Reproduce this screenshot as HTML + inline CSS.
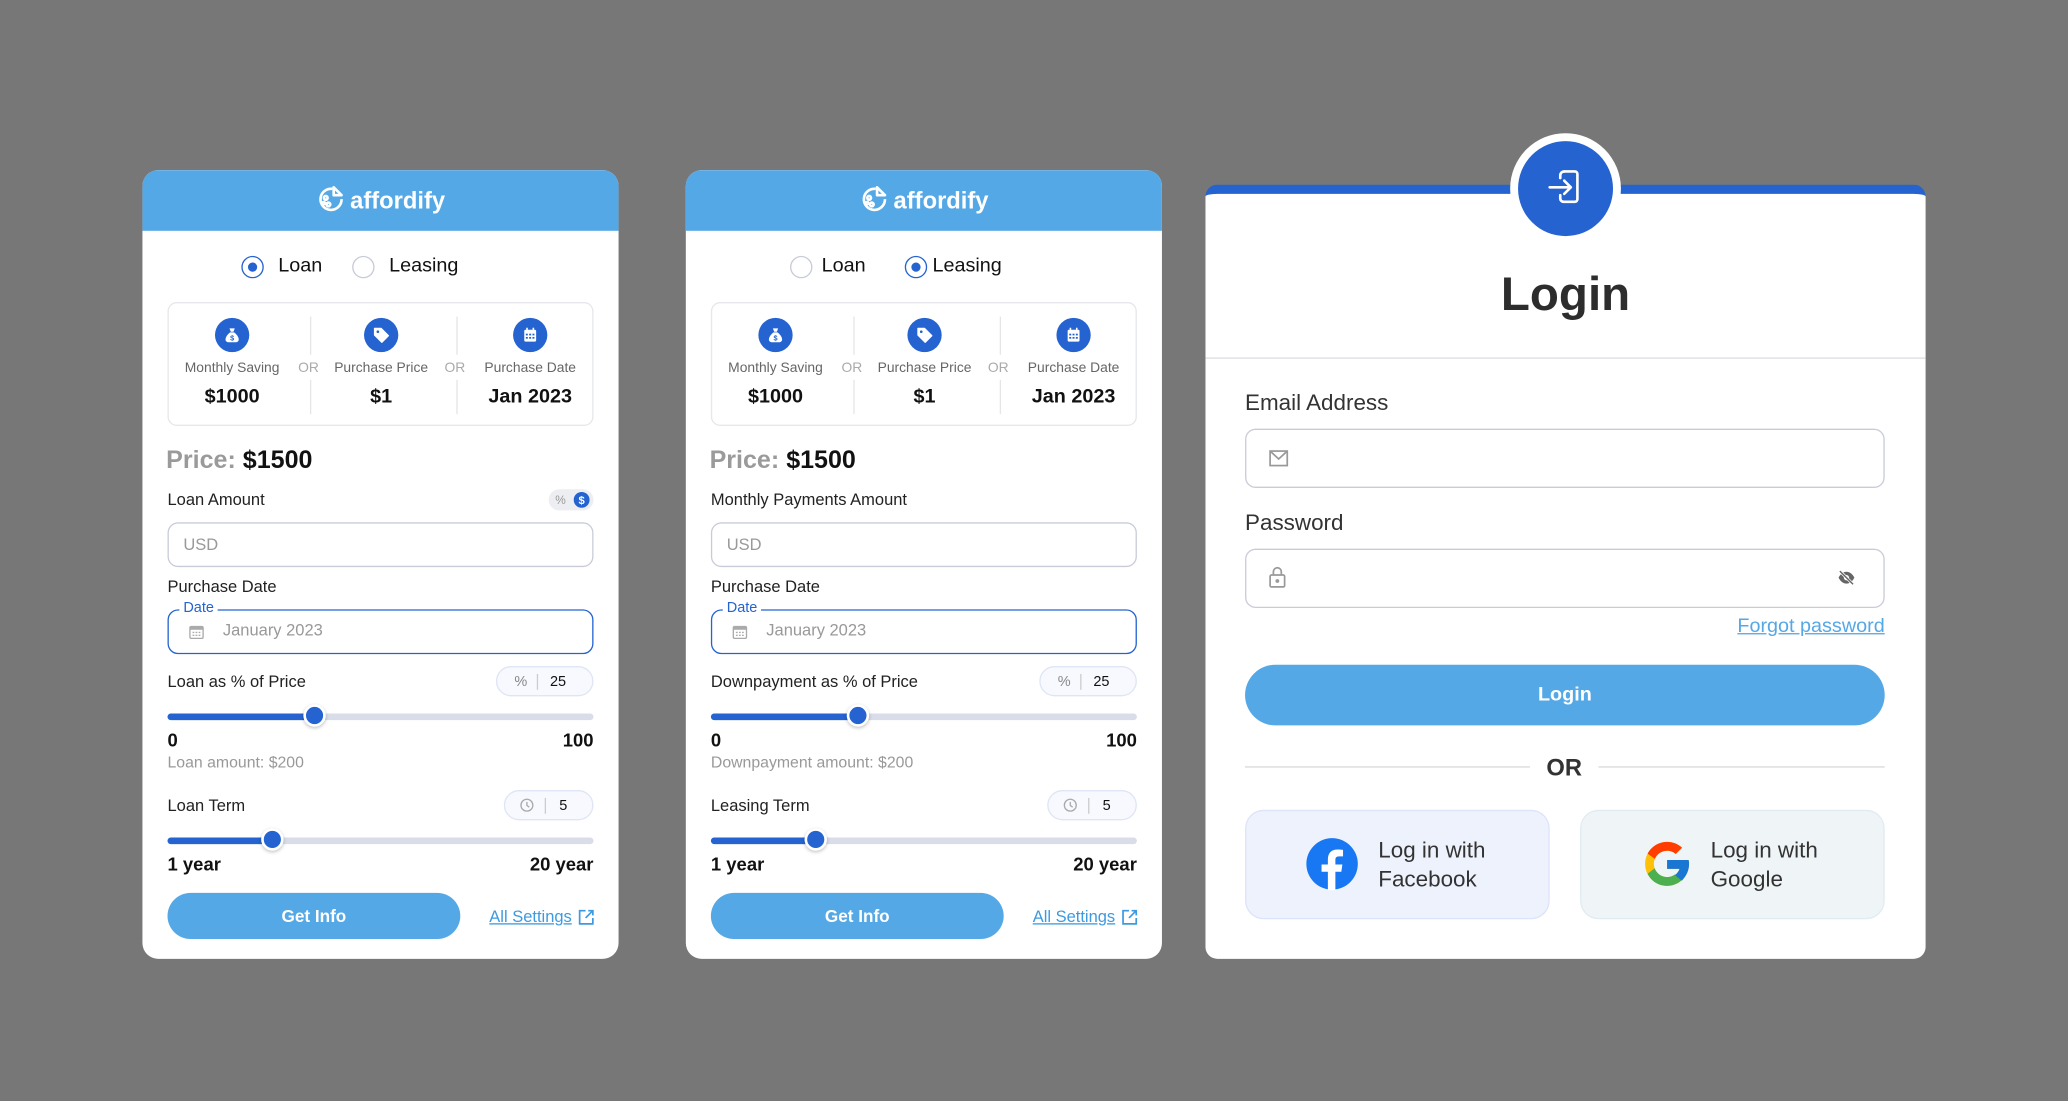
<!DOCTYPE html>
<html><head><meta charset="utf-8">
<style>
*{box-sizing:border-box;margin:0;padding:0}
html,body{width:2068px;height:1101px;overflow:hidden;background:#777777}
body{font-family:"Liberation Sans",Arial,sans-serif}
#w{position:absolute;left:0;top:0;width:1568px;height:835px;transform:scale(1.3189);transform-origin:0 0}
.a{position:absolute}
.card{position:absolute;top:129px;width:361px;height:598px;background:#fff;border-radius:12px;overflow:hidden}
.hdr{position:absolute;left:0;top:0;width:361px;height:46px;background:#55a8e6}
.logo{position:absolute;left:0;top:11px;width:361px;text-align:center;color:#fff;font-weight:bold;font-size:18px;line-height:24px}
.logo svg{vertical-align:-4px;margin-right:4px}
.t{position:absolute;white-space:nowrap}
.radio{position:absolute;width:17px;height:17px;border-radius:50%;border:1px solid #c8cbd8;background:#fff}
.radio.on{border:1.5px solid #2563d0}
.radio.on::after{content:"";position:absolute;left:3.5px;top:3.5px;width:7px;height:7px;border-radius:50%;background:#2563d0}
.stats{position:absolute;left:19px;top:100px;width:323px;height:94px;border:1px solid #e5e7eb;border-radius:7px}
.ic{position:absolute;width:26px;height:26px;border-radius:50%;background:#2563d0;top:11px}
.ic svg{position:absolute;left:6px;top:6px}
.sl{position:absolute;top:42px;font-size:10.5px;color:#666;width:110px;text-align:center;line-height:14px}
.sv{position:absolute;top:62px;font-size:15px;font-weight:bold;color:#111;width:110px;text-align:center;line-height:18px}
.or{position:absolute;top:42px;font-size:10.5px;color:#aaa;line-height:14px}
.dv{position:absolute;width:1px;background:#e6e6e6}
.lbl{font-size:12.5px;color:#222;line-height:16px}
.inp{position:absolute;left:19px;width:323px;height:34px;border:1px solid #c9ccd8;border-radius:8px}
.pill{position:absolute;height:23px;border:1px solid #dfe5f5;border-radius:12px;background:#f7f9ff;font-size:11px;line-height:21px}
.pill .t{top:1px}
.track{position:absolute;left:19px;width:323px;height:5px;border-radius:3px;background:#d8dde9}
.fill{position:absolute;left:0;top:0;height:5px;border-radius:3px;background:#2563d0}
.thumb{position:absolute;width:17px;height:17px;border-radius:50%;background:#2563d0;border:2px solid #fff;box-shadow:0 1px 3px rgba(0,0,0,.25)}
.btn{position:absolute;left:19px;top:548px;width:222px;height:35px;border-radius:18px;background:#55a8e6;color:#fff;font-weight:bold;font-size:13px;line-height:35px;text-align:center}
.link{position:absolute;top:558px;font-size:12.5px;color:#3d9ae0;text-decoration:underline;line-height:16px}
</style></head><body><div id="w">

<!-- CARD 1 -->
<div class="card" style="left:108px">
 <div class="hdr"></div>
 <div class="logo"><svg width="22" height="22" viewBox="0 0 22 22" fill="none" stroke="#fff" stroke-width="2"><path d="M12 3.2A8 8 0 1 0 19 11"/><circle cx="7" cy="10" r="1.4"/><circle cx="9" cy="15" r="1.4"/><circle cx="5.5" cy="14" r="0.8"/><path d="M13 2l6 6h-6z" stroke-linejoin="round"/></svg>affordify</div>
 <div class="radio on" style="left:75px;top:65px"></div><div class="t" style="left:103px;top:64px;font-size:15px;line-height:18px;color:#111">Loan</div>
 <div class="radio" style="left:159px;top:65px"></div><div class="t" style="left:187px;top:64px;font-size:15px;line-height:18px;color:#111">Leasing</div>
 <div class="stats">
  <div class="ic" style="left:35px"><svg width="14" height="14" viewBox="0 0 14 14"><path d="M5 2h4l-1 2.5h-2z" fill="#fff"/><path d="M5.5 5h3c2 1.5 3.5 3.5 3.5 5.5 0 1.2-1 2-2.5 2h-5C3 12.5 2 11.7 2 10.5 2 8.5 3.5 6.5 5.5 5z" fill="#fff"/><text x="7" y="11" font-size="5.5" font-weight="bold" fill="#2563d0" text-anchor="middle" font-family="Liberation Sans">$</text></svg></div>
  <div class="ic" style="left:148px"><svg width="14" height="14" viewBox="0 0 14 14"><path d="M2 2h5l5.5 5.5-5 5L2 7z" fill="#fff" stroke="#fff" stroke-linejoin="round"/><circle cx="4.5" cy="4.5" r="1" fill="#2563d0"/></svg></div>
  <div class="ic" style="left:261px"><svg width="14" height="14" viewBox="0 0 14 14"><rect x="2.5" y="3" width="9" height="9" rx="1" fill="#fff"/><rect x="4" y="1.5" width="1.2" height="2.5" fill="#fff"/><rect x="8.8" y="1.5" width="1.2" height="2.5" fill="#fff"/><g fill="#2563d0"><rect x="3.7" y="6" width="1.5" height="1.3"/><rect x="6.2" y="6" width="1.5" height="1.3"/><rect x="8.7" y="6" width="1.5" height="1.3"/><rect x="3.7" y="8.5" width="1.5" height="1.3"/><rect x="6.2" y="8.5" width="1.5" height="1.3"/><rect x="8.7" y="8.5" width="1.5" height="1.3"/></g></svg></div>
  <div class="sl" style="left:-7px">Monthly Saving</div><div class="sv" style="left:-7px">$1000</div>
  <div class="sl" style="left:106px">Purchase Price</div><div class="sv" style="left:106px">$1</div>
  <div class="sl" style="left:219px">Purchase Date</div><div class="sv" style="left:219px">Jan 2023</div>
  <div class="or" style="left:98px">OR</div><div class="or" style="left:209px">OR</div>
  <div class="dv" style="left:107px;top:10px;height:29px"></div><div class="dv" style="left:107px;top:58px;height:26px"></div>
  <div class="dv" style="left:218px;top:10px;height:29px"></div><div class="dv" style="left:218px;top:58px;height:26px"></div>
 </div>
 <div class="t" style="left:18px;top:210px;font-size:19px;font-weight:bold;line-height:22px"><span style="color:#9a9a9a">Price:</span> <span style="color:#111">$1500</span></div>
 <div class="t lbl" style="left:19px;top:242px">Loan Amount</div>
 <div class="a" style="left:308px;top:242px;width:34px;height:16px;border-radius:8px;background:#eceef2"><span class="t" style="left:5px;top:1px;font-size:9px;color:#999;line-height:14px">%</span><span class="a" style="left:19px;top:2px;width:12px;height:12px;border-radius:50%;background:#2563d0;color:#fff;font-size:8.5px;font-weight:bold;line-height:12px;text-align:center">$</span></div>
 <div class="inp" style="top:267px"><span class="t" style="left:11px;top:9px;font-size:12.5px;color:#999;line-height:15px">USD</span></div>
 <div class="t lbl" style="left:19px;top:308px">Purchase Date</div>
 <div class="inp" style="top:333px;border:1.3px solid #2563d0"><span class="t" style="left:8px;top:-8px;background:#fff;padding:0 3px;font-size:11px;color:#2563d0;line-height:13px">Date</span>
  <svg class="a" style="left:15px;top:10px" width="12" height="12" viewBox="0 0 12 12"><rect x="1" y="2" width="10" height="9" rx="1" fill="none" stroke="#aaa"/><rect x="1" y="2" width="10" height="2.5" fill="#aaa"/><g fill="#aaa"><rect x="3" y="6" width="1.3" height="1"/><rect x="5.3" y="6" width="1.3" height="1"/><rect x="7.6" y="6" width="1.3" height="1"/><rect x="3" y="8.2" width="1.3" height="1"/><rect x="5.3" y="8.2" width="1.3" height="1"/><rect x="7.6" y="8.2" width="1.3" height="1"/></g></svg>
  <span class="t" style="left:41px;top:8px;font-size:12.5px;color:#999;line-height:15px">January 2023</span></div>
 <div class="t lbl" style="left:19px;top:380px">Loan as % of Price</div>
 <div class="pill" style="left:268px;top:376px;width:74px"><span class="t" style="left:13px;color:#888">%</span><span class="a" style="left:30px;top:5px;width:1px;height:12px;background:#ccc"></span><span class="t" style="left:40px;color:#111">25</span></div>
 <div class="track" style="top:412px"><div class="fill" style="width:112px"></div></div><div class="thumb" style="left:122px;top:405px"></div>
 <div class="t" style="left:19px;top:424px;font-size:14px;font-weight:bold;color:#111;line-height:16px">0</div>
 <div class="t" style="right:19px;top:424px;font-size:14px;font-weight:bold;color:#111;line-height:16px">100</div>
 <div class="t" style="left:19px;top:442px;font-size:12px;color:#999;line-height:15px">Loan amount: $200</div>
 <div class="t lbl" style="left:19px;top:474px">Loan Term</div>
 <div class="pill" style="left:274px;top:470px;width:68px"><svg class="a" style="left:11px;top:5px" width="11" height="11" viewBox="0 0 11 11" fill="none" stroke="#aaa"><circle cx="5.5" cy="5.5" r="4.5"/><path d="M5.5 3v2.7l1.8 1.3"/></svg><span class="a" style="left:30px;top:5px;width:1px;height:12px;background:#ccc"></span><span class="t" style="left:41px;color:#111">5</span></div>
 <div class="track" style="top:506px"><div class="fill" style="width:79px"></div></div><div class="thumb" style="left:90px;top:499px"></div>
 <div class="t" style="left:19px;top:518px;font-size:14px;font-weight:bold;color:#111;line-height:16px">1 year</div>
 <div class="t" style="right:19px;top:518px;font-size:14px;font-weight:bold;color:#111;line-height:16px">20 year</div>
 <div class="btn">Get Info</div>
 <div class="link" style="left:263px">All Settings</div>
 <svg class="a" style="left:330px;top:560px" width="13" height="13" viewBox="0 0 13 13" fill="none" stroke="#3d9ae0" stroke-width="1.3"><path d="M6 1.5H1.5v10h10V7"/><path d="M8 1.5h3.5V5M11.5 1.5L6 7"/></svg>
</div>

<!-- CARD 2 -->
<div class="card" style="left:520px">
 <div class="hdr"></div>
 <div class="logo"><svg width="22" height="22" viewBox="0 0 22 22" fill="none" stroke="#fff" stroke-width="2"><path d="M12 3.2A8 8 0 1 0 19 11"/><circle cx="7" cy="10" r="1.4"/><circle cx="9" cy="15" r="1.4"/><circle cx="5.5" cy="14" r="0.8"/><path d="M13 2l6 6h-6z" stroke-linejoin="round"/></svg>affordify</div>
 <div class="radio" style="left:79px;top:65px"></div><div class="t" style="left:103px;top:64px;font-size:15px;line-height:18px;color:#111">Loan</div>
 <div class="radio on" style="left:166px;top:65px"></div><div class="t" style="left:187px;top:64px;font-size:15px;line-height:18px;color:#111">Leasing</div>
 <div class="stats">
  <div class="ic" style="left:35px"><svg width="14" height="14" viewBox="0 0 14 14"><path d="M5 2h4l-1 2.5h-2z" fill="#fff"/><path d="M5.5 5h3c2 1.5 3.5 3.5 3.5 5.5 0 1.2-1 2-2.5 2h-5C3 12.5 2 11.7 2 10.5 2 8.5 3.5 6.5 5.5 5z" fill="#fff"/><text x="7" y="11" font-size="5.5" font-weight="bold" fill="#2563d0" text-anchor="middle" font-family="Liberation Sans">$</text></svg></div>
  <div class="ic" style="left:148px"><svg width="14" height="14" viewBox="0 0 14 14"><path d="M2 2h5l5.5 5.5-5 5L2 7z" fill="#fff" stroke="#fff" stroke-linejoin="round"/><circle cx="4.5" cy="4.5" r="1" fill="#2563d0"/></svg></div>
  <div class="ic" style="left:261px"><svg width="14" height="14" viewBox="0 0 14 14"><rect x="2.5" y="3" width="9" height="9" rx="1" fill="#fff"/><rect x="4" y="1.5" width="1.2" height="2.5" fill="#fff"/><rect x="8.8" y="1.5" width="1.2" height="2.5" fill="#fff"/><g fill="#2563d0"><rect x="3.7" y="6" width="1.5" height="1.3"/><rect x="6.2" y="6" width="1.5" height="1.3"/><rect x="8.7" y="6" width="1.5" height="1.3"/><rect x="3.7" y="8.5" width="1.5" height="1.3"/><rect x="6.2" y="8.5" width="1.5" height="1.3"/><rect x="8.7" y="8.5" width="1.5" height="1.3"/></g></svg></div>
  <div class="sl" style="left:-7px">Monthly Saving</div><div class="sv" style="left:-7px">$1000</div>
  <div class="sl" style="left:106px">Purchase Price</div><div class="sv" style="left:106px">$1</div>
  <div class="sl" style="left:219px">Purchase Date</div><div class="sv" style="left:219px">Jan 2023</div>
  <div class="or" style="left:98px">OR</div><div class="or" style="left:209px">OR</div>
  <div class="dv" style="left:107px;top:10px;height:29px"></div><div class="dv" style="left:107px;top:58px;height:26px"></div>
  <div class="dv" style="left:218px;top:10px;height:29px"></div><div class="dv" style="left:218px;top:58px;height:26px"></div>
 </div>
 <div class="t" style="left:18px;top:210px;font-size:19px;font-weight:bold;line-height:22px"><span style="color:#9a9a9a">Price:</span> <span style="color:#111">$1500</span></div>
 <div class="t lbl" style="left:19px;top:242px">Monthly Payments Amount</div>
 <div class="inp" style="top:267px"><span class="t" style="left:11px;top:9px;font-size:12.5px;color:#999;line-height:15px">USD</span></div>
 <div class="t lbl" style="left:19px;top:308px">Purchase Date</div>
 <div class="inp" style="top:333px;border:1.3px solid #2563d0"><span class="t" style="left:8px;top:-8px;background:#fff;padding:0 3px;font-size:11px;color:#2563d0;line-height:13px">Date</span>
  <svg class="a" style="left:15px;top:10px" width="12" height="12" viewBox="0 0 12 12"><rect x="1" y="2" width="10" height="9" rx="1" fill="none" stroke="#aaa"/><rect x="1" y="2" width="10" height="2.5" fill="#aaa"/><g fill="#aaa"><rect x="3" y="6" width="1.3" height="1"/><rect x="5.3" y="6" width="1.3" height="1"/><rect x="7.6" y="6" width="1.3" height="1"/><rect x="3" y="8.2" width="1.3" height="1"/><rect x="5.3" y="8.2" width="1.3" height="1"/><rect x="7.6" y="8.2" width="1.3" height="1"/></g></svg>
  <span class="t" style="left:41px;top:8px;font-size:12.5px;color:#999;line-height:15px">January 2023</span></div>
 <div class="t lbl" style="left:19px;top:380px">Downpayment as % of Price</div>
 <div class="pill" style="left:268px;top:376px;width:74px"><span class="t" style="left:13px;color:#888">%</span><span class="a" style="left:30px;top:5px;width:1px;height:12px;background:#ccc"></span><span class="t" style="left:40px;color:#111">25</span></div>
 <div class="track" style="top:412px"><div class="fill" style="width:112px"></div></div><div class="thumb" style="left:122px;top:405px"></div>
 <div class="t" style="left:19px;top:424px;font-size:14px;font-weight:bold;color:#111;line-height:16px">0</div>
 <div class="t" style="right:19px;top:424px;font-size:14px;font-weight:bold;color:#111;line-height:16px">100</div>
 <div class="t" style="left:19px;top:442px;font-size:12px;color:#999;line-height:15px">Downpayment amount: $200</div>
 <div class="t lbl" style="left:19px;top:474px">Leasing Term</div>
 <div class="pill" style="left:274px;top:470px;width:68px"><svg class="a" style="left:11px;top:5px" width="11" height="11" viewBox="0 0 11 11" fill="none" stroke="#aaa"><circle cx="5.5" cy="5.5" r="4.5"/><path d="M5.5 3v2.7l1.8 1.3"/></svg><span class="a" style="left:30px;top:5px;width:1px;height:12px;background:#ccc"></span><span class="t" style="left:41px;color:#111">5</span></div>
 <div class="track" style="top:506px"><div class="fill" style="width:80px"></div></div><div class="thumb" style="left:90px;top:499px"></div>
 <div class="t" style="left:19px;top:518px;font-size:14px;font-weight:bold;color:#111;line-height:16px">1 year</div>
 <div class="t" style="right:19px;top:518px;font-size:14px;font-weight:bold;color:#111;line-height:16px">20 year</div>
 <div class="btn">Get Info</div>
 <div class="link" style="left:263px">All Settings</div>
 <svg class="a" style="left:330px;top:560px" width="13" height="13" viewBox="0 0 13 13" fill="none" stroke="#3d9ae0" stroke-width="1.3"><path d="M6 1.5H1.5v10h10V7"/><path d="M8 1.5h3.5V5M11.5 1.5L6 7"/></svg>
</div>

<!-- CARD 3 LOGIN -->
<div class="a" style="left:914px;top:140px;width:546px;height:587px;background:#fff;border-radius:9px;border-top:7px solid #2563d0"></div>
<div class="a" style="left:1145px;top:101px;width:84px;height:84px;border-radius:50%;background:#fff"></div>
<div class="a" style="left:1151px;top:107px;width:72px;height:72px;border-radius:50%;background:#2563d0"></div>
<svg class="a" style="left:1172px;top:127px" width="30" height="30" viewBox="0 0 30 30" fill="none" stroke="#fff" stroke-width="2" stroke-linecap="round" stroke-linejoin="round"><path d="M14 3h8a2 2 0 0 1 2 2v19a2 2 0 0 1-2 2h-8M11 21v2.5a2.5 2.5 0 0 0 2.5 2.5"/><path d="M11 8V6a3 3 0 0 1 3-3"/><path d="M3 15h16M14 10l5 5-5 5"/></svg>
<div class="t" style="left:914px;width:546px;text-align:center;top:201px;font-size:36px;font-weight:bold;color:#2d2d2d;line-height:44px">Login</div>
<div class="a" style="left:914px;top:271px;width:546px;height:1px;background:#dcdde2"></div>
<div class="t" style="left:944px;top:295px;font-size:17px;color:#333;line-height:21px">Email Address</div>
<div class="a" style="left:944px;top:325px;width:485px;height:45px;border:1px solid #c9ccd8;border-radius:8px"></div>
<svg class="a" style="left:962px;top:341px" width="15" height="13" viewBox="0 0 15 13" fill="none" stroke="#999" stroke-width="1.3"><rect x="1" y="1" width="13" height="11"/><path d="M1 1l6.5 6 6.5-6"/></svg>
<div class="t" style="left:944px;top:386px;font-size:17px;color:#333;line-height:21px">Password</div>
<div class="a" style="left:944px;top:416px;width:485px;height:45px;border:1px solid #c9ccd8;border-radius:8px"></div>
<svg class="a" style="left:962px;top:429px" width="13" height="17" viewBox="0 0 13 17" fill="none" stroke="#999" stroke-width="1.3"><rect x="1" y="7" width="11" height="9" rx="1"/><path d="M3.5 7V4.5a3 3 0 0 1 6 0V7"/><circle cx="6.5" cy="11.5" r="0.8" fill="#999"/></svg>
<svg class="a" style="left:1393px;top:432px" width="14" height="12" viewBox="0 0 14 12"><path d="M1 6c1.5-3 3.7-4.5 6-4.5S11.5 3 13 6c-1.5 3-3.7 4.5-6 4.5S2.5 9 1 6z" fill="#666"/><circle cx="7" cy="6" r="2" fill="#fff"/><path d="M2 1l10 10" stroke="#fff" stroke-width="2.2"/><path d="M2 1l10 10" stroke="#666" stroke-width="1.1"/></svg>
<div class="t" style="right:139px;top:465px;font-size:15px;color:#55a8e6;text-decoration:underline;line-height:19px">Forgot password</div>
<div class="a" style="left:944px;top:504px;width:485px;height:46px;border-radius:23px;background:#55a8e6;color:#fff;font-weight:bold;font-size:15px;line-height:46px;text-align:center">Login</div>
<div class="a" style="left:944px;top:581px;width:216px;height:1px;background:#d8d8dc"></div>
<div class="a" style="left:1212px;top:581px;width:217px;height:1px;background:#d8d8dc"></div>
<div class="t" style="left:1160px;width:52px;text-align:center;top:571px;font-size:18px;font-weight:bold;color:#333;line-height:22px">OR</div>
<div class="a" style="left:944px;top:614px;width:231px;height:83px;border-radius:14px;background:#eef2fd;border:1px solid #dde4fa"></div>
<svg class="a" style="left:990px;top:635px" width="40" height="40" viewBox="0 0 40 40"><circle cx="20" cy="20" r="19.5" fill="#1877f2"/><path d="M22.5 40V26h4.5l.8-5.5h-5.3v-3.5c0-1.6.5-2.7 2.8-2.7h3v-4.9c-.5-.1-2.3-.3-4.3-.3-4.300 0-7.2 2.6-7.2 7.4v4h-4.8V26h4.8v14z" fill="#fff"/></svg>
<div class="t" style="left:1045px;top:634px;font-size:17px;color:#333;line-height:22px">Log in with<br>Facebook</div>
<div class="a" style="left:1198px;top:614px;width:231px;height:83px;border-radius:14px;background:#eff4f7;border:1px solid #e0ebf3"></div>
<svg class="a" style="left:1244px;top:635px" width="40" height="40" viewBox="0 0 48 48"><path d="M43.6 20.5H24v8h11.3C33.7 33.4 29.3 36 24 36c-6.6 0-12-5.4-12-12s5.4-12 12-12c3 0 5.8 1.1 7.9 3l5.7-5.7C34 6 29.3 4 24 4 13 4 4 13 4 24s9 20 20 20 20-9 20-20c0-1.2-.1-2.4-.4-3.5z" fill="#ffc107"/><path d="M6.3 14.7l6.6 4.8C14.7 15.1 19 12 24 12c3 0 5.8 1.1 7.9 3l5.7-5.7C34 6 29.3 4 24 4 16.3 4 9.700 8.3 6.3 14.7z" fill="#ff3d00"/><path d="M24 44c5.2 0 9.9-2 13.4-5.2l-6.2-5.2C29.2 35.1 26.7 36 24 36c-5.2 0-9.6-3.3-11.3-8l-6.5 5C9.5 39.6 16.2 44 24 44z" fill="#4caf50"/><path d="M43.6 20.5H24v8h11.3c-.8 2.3-2.3 4.3-4.1 5.7l6.2 5.2C37 39.2 44 34 44 24c0-1.2-.1-2.4-.4-3.5z" fill="#1976d2"/></svg>
<div class="t" style="left:1297px;top:634px;font-size:17px;color:#333;line-height:22px">Log in with<br>Google</div>

</div></body></html>
